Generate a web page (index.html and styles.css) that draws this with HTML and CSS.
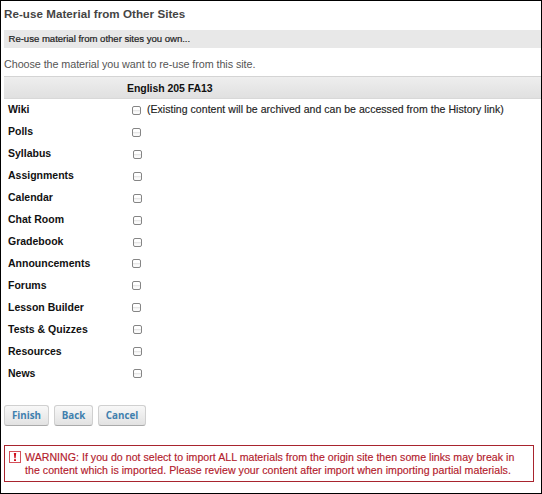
FILE: index.html
```html
<!DOCTYPE html>
<html lang="en">
<head>
<meta charset="utf-8">
<title>Re-use Material from Other Sites</title>
<link rel="stylesheet" href="styles.css">
</head>
<body>
<main class="page">
  <h1 class="title"><span>Re-use Material from Other Sites</span></h1>
  <div class="subtitle"><span>Re-use material from other sites you own...</span></div>
  <p class="intro"><span>Choose the material you want to re-use from this site.</span></p>
  <div class="row head"><span></span><span class="site">English 205 FA13</span></div>
  <div class="rows">
    <div class="row"><span class="name">Wiki</span><label class="pick"><input type="checkbox"><span class="note">(Existing content will be archived and can be accessed from the History link)</span></label></div>
    <div class="row"><span class="name">Polls</span><input type="checkbox"></div>
    <div class="row"><span class="name">Syllabus</span><input type="checkbox" class="nudge"></div>
    <div class="row"><span class="name">Assignments</span><input type="checkbox" class="nudge"></div>
    <div class="row"><span class="name">Calendar</span><input type="checkbox" class="nudge"></div>
    <div class="row"><span class="name">Chat Room</span><input type="checkbox" class="nudge"></div>
    <div class="row"><span class="name">Gradebook</span><input type="checkbox" class="nudge"></div>
    <div class="row"><span class="name">Announcements</span><input type="checkbox" class="raise"></div>
    <div class="row"><span class="name">Forums</span><input type="checkbox" class="raise"></div>
    <div class="row"><span class="name">Lesson Builder</span><input type="checkbox" class="raise"></div>
    <div class="row"><span class="name">Tests &amp; Quizzes</span><input type="checkbox" class="nudge raise"></div>
    <div class="row"><span class="name">Resources</span><input type="checkbox" class="nudge raise"></div>
    <div class="row"><span class="name">News</span><input type="checkbox" class="nudge raise"></div>
  </div>
  <div class="actions">
    <button class="finish">Finish</button>
    <button class="back">Back</button>
    <button class="cancel">Cancel</button>
  </div>
  <div class="warning">
    <svg class="alert" viewBox="0 0 12 12" width="12" height="12"><rect x=".5" y=".5" width="11" height="11" fill="#fff" stroke="#d4505a"/><path d="M4.8 2h2.4L6.6 7.3H5.4zM5 8.2h2V10H5z" fill="#d0101c"/></svg>
    <p><span class="line1">WARNING: If you do not select to import ALL materials from the origin site then some links may break in</span><br><span class="line2">the content which is imported. Please review your content after import when importing partial materials.</span></p>
  </div>
</main>
</body>
</html>
```
FILE: styles.css
```css
* { box-sizing: border-box; }
body {
  margin: 0;
  background: #fff;
  font-family: "Liberation Sans", Arial, sans-serif;
  font-size: 10.5px;
  color: #222;
}
.page {
  height: 494px;
  border: 1px solid #000;
  padding-left: 3px;
  overflow: hidden;
  white-space: nowrap;
}
.title {
  margin: 0;
  padding-top: 4px;
  height: 29px;
  font-size: 11.6px;
  letter-spacing: .05px;
  line-height: 17px;
  color: #444;
}
.subtitle {
  height: 18px;
  padding-left: 4.5px;
  background: #e8e8e8;
  font-size: 9.6px;
  letter-spacing: -.03px;
  line-height: 18px;
  color: #222;
  -webkit-text-stroke: .2px #222;
}
.intro {
  margin: 0;
  height: 28px;
  padding-top: 8px;
  font-size: 10.8px;
  letter-spacing: -.08px;
  line-height: 16px;
  color: #555;
}
.row {
  display: grid;
  grid-template-columns: 119px 1fr;
  align-items: center;
  height: 22px;
  padding-left: 4px;
}
.head {
  height: 23px;
  border-top: 1px solid #d4d4d4;
  border-bottom: 1px solid #d8d8d8;
  background: linear-gradient(#eee, #e0e0e0);
}
.site, .name {
  font-weight: bold;
  color: #111;
}
.site { letter-spacing: -.05px; }
.name { margin-top: -2px; }
.note {
  margin-top: -3px;
  letter-spacing: .04px;
  -webkit-text-stroke: .15px #222;
}
.rows { height: 306px; }
.pick {
  display: flex;
  align-items: center;
  gap: 6px;
}
input {
  appearance: none;
  width: 9px;
  height: 9px;
  margin: 0 0 0 5px;
  border: 1px solid #858585;
  border-radius: 2px;
  background: linear-gradient(#fff 35%, #e6e6e6 50%, #fafafa 70%);
}
.nudge { margin-left: 5.5px; }
.raise { margin-bottom: 2px; }
.actions {
  display: flex;
  gap: 5px;
  height: 40px;
}
button {
  height: 21px;
  padding: 0;
  border: 1px solid #d0d0d0;
  border-bottom-color: #aaa;
  border-radius: 3px;
  background: linear-gradient(#f8f8f8, #e2e2e2);
  font: bold 9.8px/17px "Open Sans", "Noto Sans", sans-serif;
  color: #3f80ae;
}
.finish { width: 45px; }
.back { width: 39px; }
.cancel { width: 48px; }
.warning {
  display: flex;
  gap: 4px;
  width: 530px;
  height: 37px;
  padding: 5px 4px;
  border: 1px solid #a8242e;
  color: #b3202c;
}
.warning p {
  margin: 0;
  font-size: 10.6px;
  line-height: 13px;
  -webkit-text-stroke: .15px #b3202c;
}
.line1 { letter-spacing: .025px; }
.line2 { letter-spacing: .035px; }
.alert { flex: none; }
```
